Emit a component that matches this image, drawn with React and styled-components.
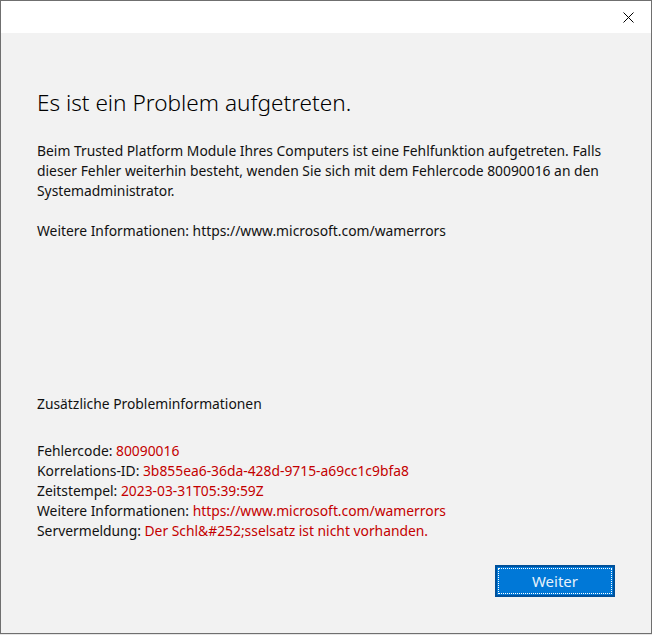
import React from "react";
import styled, { createGlobalStyle } from "styled-components";

const Global = createGlobalStyle`
  html, body { margin: 0; padding: 0; background: #e6e6e6; }
  body { width: 652px; height: 635px; overflow: hidden; }
`;

const Window = styled.div`
  box-sizing: border-box;
  width: 652px;
  height: 634px;
  border: 1px solid #6f6f6f;
  display: flex;
  flex-direction: column;
  font-family: "Noto Sans", "Segoe UI", sans-serif;
  color: #111;
`;

const TitleBar = styled.div`
  height: 32px;
  flex: none;
  background: #ffffff;
  display: flex;
  justify-content: flex-end;
`;

const CloseButton = styled.button`
  width: 46px;
  height: 32px;
  border: 0;
  background: transparent;
  display: flex;
  align-items: center;
  justify-content: center;
  padding: 0;
`;

const Content = styled.div`
  flex: 1;
  background: #f2f2f2;
  padding: 0 36px;
  display: flex;
  flex-direction: column;
`;

const Title = styled.h1`
  margin: 52px 0 0;
  font-size: 22.6px;
  font-weight: 300;
  line-height: 36px;
  color: #000;
`;

const Paragraph = styled.p`
  margin: ${(p) => p.$top || 0}px 0 0;
  font-size: 13.85px;
  line-height: 20px;
  color: #111;
`;

const Value = styled.span`
  color: #c40000;
`;

const Footer = styled.div`
  display: flex;
  justify-content: flex-end;
  margin-top: 24px;
`;

const PrimaryButton = styled.button`
  box-sizing: border-box;
  width: 120px;
  height: 32px;
  background: #0078d7;
  border: 2px solid #00509a;
  padding: 1px;
  font-family: inherit;
  cursor: pointer;
`;

const FocusRect = styled.span`
  box-sizing: border-box;
  display: flex;
  align-items: center;
  justify-content: center;
  height: 100%;
  border: 1px dotted #ffffff;
  color: #e6f2fb;
  font-size: 15px;
`;

export default function App() {
  return (
    <>
      <Global />
      <Window>
        <TitleBar>
          <CloseButton aria-label="Schließen">
            <svg width="11" height="11" viewBox="0 0 11 11">
              <path d="M0.5 0.5 L10.5 10.5 M10.5 0.5 L0.5 10.5" stroke="#000" strokeWidth="1" fill="none" />
            </svg>
          </CloseButton>
        </TitleBar>
        <Content>
          <Title>Es ist ein Problem aufgetreten.</Title>
          <Paragraph $top={20}>
            Beim Trusted Platform Module Ihres Computers ist eine Fehlfunktion aufgetreten. Falls
            <br />
            dieser Fehler weiterhin besteht, wenden Sie sich mit dem Fehlercode 80090016 an den
            <br />
            Systemadministrator.
          </Paragraph>
          <Paragraph $top={20}>
            Weitere Informationen: https://www.microsoft.com/wamerrors
          </Paragraph>
          <Paragraph $top={153}>Zusätzliche Probleminformationen</Paragraph>
          <Paragraph $top={27}>
            Fehlercode: <Value>80090016</Value>
            <br />
            Korrelations-ID: <Value>3b855ea6-36da-428d-9715-a69cc1c9bfa8</Value>
            <br />
            Zeitstempel: <Value>2023-03-31T05:39:59Z</Value>
            <br />
            Weitere Informationen: <Value>https://www.microsoft.com/wamerrors</Value>
            <br />
            Servermeldung: <Value>Der Schl&amp;#252;sselsatz ist nicht vorhanden.</Value>
          </Paragraph>
          <Footer>
            <PrimaryButton>
              <FocusRect>Weiter</FocusRect>
            </PrimaryButton>
          </Footer>
        </Content>
      </Window>
    </>
  );
}
